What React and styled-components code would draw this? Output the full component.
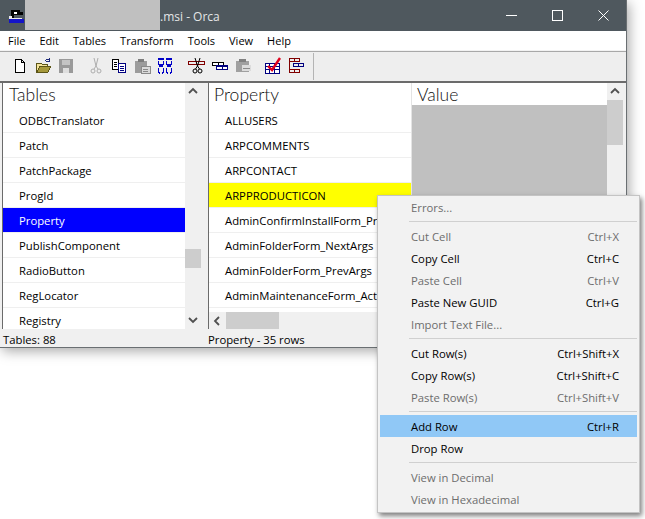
import React from "react";
import styled, { createGlobalStyle } from "styled-components";

const GlobalStyle = createGlobalStyle`
  html, body { margin: 0; padding: 0; background: #fff; }
  body { font-family: "Open Sans", "Noto Sans", "Liberation Sans", sans-serif; font-size: 11.3px; color: #000; }
`;

const Page = styled.div`
  position: relative;
  width: 645px;
  height: 519px;
  overflow: hidden;
`;

const Window = styled.div`
  width: 627px;
  height: 348px;
  display: flex;
  flex-direction: column;
  background: #f0f0f0;
  box-shadow: 2px 3px 12px rgba(0, 0, 0, 0.35);
  border-right: 1px solid #6a6f72;
  border-bottom: 1px solid #6a6f72;
  box-sizing: border-box;
`;

const TitleBar = styled.div`
  height: 31px;
  flex: none;
  display: flex;
  align-items: center;
  background: #4f585e;
  color: #e4e6e7;
  font-size: 12px;
  padding-left: 8px;
`;

const AppIcon = styled.svg`
  width: 17px;
  height: 17px;
  flex: none;
`;

const Redacted = styled.div`
  width: 135px;
  height: 30px;
  align-self: flex-start;
  background: #c0c0c0;
`;

const WindowTitle = styled.span`
  flex: 1;
  padding-top: 1px;
`;

const WinButton = styled.button`
  width: 46px;
  height: 30px;
  padding: 0;
  border: 0;
  background: none;
  display: flex;
  align-items: center;
  justify-content: center;
`;

const WinControls = styled.div`
  display: flex;
`;

const MenuBar = styled.div`
  height: 20px;
  flex: none;
  display: flex;
  align-items: center;
  background: #fff;
  padding-left: 8px;
  gap: 14px;
  font-size: 11px;
  border-bottom: 1px solid #f2f2f2;
  box-sizing: border-box;
`;

const Toolbar = styled.div`
  height: 30px;
  flex: none;
  display: flex;
  align-items: center;
  padding-left: 8px;
  padding-bottom: 1px;
  background: #eeeeee;
  border-top: 1px solid #a8a8a8;
  box-sizing: border-box;
`;

const ToolGroup = styled.div`
  display: flex;
  margin-right: ${(p) => p.$gap || 0}px;
`;

const ToolButton = styled.div`
  width: 23px;
  height: 23px;
  display: flex;
  align-items: center;
  justify-content: center;
`;

const ToolSep = styled.div`
  width: 1px;
  height: 27px;
  background: #b4b4b4;
`;

const Body = styled.div`
  height: 246px;
  flex: none;
  display: flex;
  background: #f0f0f0;
  border-top: 2px solid #6b6b6b;
  padding-left: 2px;
  padding-right: 3px;
`;

const Pane = styled.div`
  display: flex;
  flex: ${(p) => (p.$grow ? 1 : "none")};
  width: ${(p) => (p.$grow ? "auto" : "198px")};
  min-width: 0;
  border-left: 1px solid #6b6b6b;
  background: #fff;
  height: 246px;
  overflow: hidden;
`;

const Splitter = styled.div`
  width: 7px;
  flex: none;
  background: #f0f0f0;
`;

const List = styled.div`
  display: flex;
  flex-direction: column;
  flex: ${(p) => (p.$width ? "none" : 1)};
  width: ${(p) => (p.$width ? `${p.$width}px` : "auto")};
  min-width: 0;
  overflow: hidden;
`;

const HeaderCell = styled.div`
  height: ${(p) => p.$height || 25}px;
  flex: none;
  padding-left: ${(p) => p.$indent || 5}px;
  font-family: Lato, "Open Sans", sans-serif;
  font-size: 17.5px;
  font-weight: 300;
  line-height: 24px;
  color: #111;
`;

const Row = styled.div`
  height: 25px;
  flex: none;
  box-sizing: border-box;
  padding-left: 16px;
  line-height: 26px;
  white-space: nowrap;
  overflow: hidden;
  border-bottom: 1px solid #efefef;
  background: ${(p) => (p.$tone === "blue" ? "#0000ff" : p.$tone === "yellow" ? "#ffff00" : "#fff")};
  color: ${(p) => (p.$tone === "blue" ? "#fff" : "#000")};
`;

const ValueColumn = styled.div`
  width: 195px;
  flex: none;
  display: flex;
  flex-direction: column;
  border-left: 1px solid #e4e4e4;
`;

const ValueFill = styled.div`
  flex: 1;
  background: #c0c0c0;
`;

const VScroll = styled.div`
  width: 16px;
  flex: none;
  display: flex;
  flex-direction: column;
  background: #f0f0f0;
`;

const Arrow = styled.div`
  height: 17px;
  flex: none;
  display: flex;
  align-items: center;
  justify-content: center;
`;

const VTrack = styled.div`
  flex: 1;
  min-height: 0;
`;

const VThumb = styled.div`
  height: ${(p) => p.$size}px;
  margin-top: ${(p) => p.$offset}px;
  background: #cdcdcd;
`;

const RightMain = styled.div`
  flex: 1;
  min-width: 0;
  display: flex;
  flex-direction: column;
`;

const RightTop = styled.div`
  flex: 1;
  min-height: 0;
  display: flex;
`;

const HScroll = styled.div`
  height: 17px;
  margin-top: 3px;
  flex: none;
  display: flex;
  align-items: center;
  background: #f0f0f0;
`;

const HArrow = styled.div`
  width: 17px;
  flex: none;
  display: flex;
  justify-content: center;
`;

const HThumb = styled.div`
  width: 53px;
  height: 17px;
  background: #cdcdcd;
`;

const StatusBar = styled.div`
  flex: 1;
  display: flex;
  align-items: center;
  background: #f0f0f0;
  padding-left: 3px;
  padding-top: 3px;
`;

const StatusCell = styled.div`
  width: ${(p) => p.$width}px;
  flex: none;
`;

const ContextMenu = styled.div`
  position: absolute;
  left: 377px;
  top: 195px;
  width: 263px;
  height: 318px;
  box-sizing: border-box;
  padding: 0 2px 2px;
  background: #f2f2f2;
  border: 1px solid #c4c4c4;
  box-shadow: 2px 3px 5px rgba(0, 0, 0, 0.5);
  display: flex;
  flex-direction: column;
`;

const MenuItem = styled.div`
  height: 22px;
  flex: none;
  display: flex;
  align-items: center;
  justify-content: space-between;
  padding: 0 18px 0 31px;
  color: ${(p) => (p.$disabled ? "#6d6d6d" : "#000")};
  background: ${(p) => (p.$active ? "#90c8f6" : "transparent")};
`;

const MenuSep = styled.div`
  height: 1px;
  flex: none;
  margin: 3px 0 3px 29px;
  background: #d0d0d0;
`;

const menuBlocks = [
  [{ label: "Errors...", off: true }],
  [
    { label: "Cut Cell", key: "Ctrl+X", off: true },
    { label: "Copy Cell", key: "Ctrl+C" },
    { label: "Paste Cell", key: "Ctrl+V", off: true },
    { label: "Paste New GUID", key: "Ctrl+G" },
    { label: "Import Text File...", off: true },
  ],
  [
    { label: "Cut Row(s)", key: "Ctrl+Shift+X" },
    { label: "Copy Row(s)", key: "Ctrl+Shift+C" },
    { label: "Paste Row(s)", key: "Ctrl+Shift+V", off: true },
  ],
  [
    { label: "Add Row", key: "Ctrl+R", active: true },
    { label: "Drop Row" },
  ],
  [
    { label: "View in Decimal", off: true },
    { label: "View in Hexadecimal", off: true },
  ],
];

const tables = ["ODBCTranslator", "Patch", "PatchPackage", "ProgId", "Property", "PublishComponent", "RadioButton", "RegLocator", "Registry"];
const props = ["ALLUSERS", "ARPCOMMENTS", "ARPCONTACT", "ARPPRODUCTICON", "AdminConfirmInstallForm_Pr", "AdminFolderForm_NextArgs", "AdminFolderForm_PrevArgs", "AdminMaintenanceForm_Action"];
const menus = ["File", "Edit", "Tables", "Transform", "Tools", "View", "Help"];

const Icon = ({ children }) => (
  <svg width="18" height="18" viewBox="0 0 18 18" shapeRendering="crispEdges">{children}</svg>
);

const Grid = ({ x, y, c, w = 5 }) => (
  <g fill="none" stroke={c}>
    <rect x={x + 0.5} y={y + 0.5} width={w} height="3" />
    <rect x={x + w + 0.5} y={y + 0.5} width={w} height="3" />
  </g>
);

const NewIcon = () => (
  <Icon>
    <path d="M4.5 2.5h6l3 3v10h-9z M10.5 2.5v3h3" fill="#fff" stroke="#000" />
  </Icon>
);
const OpenIcon = () => (
  <Icon>
    <path d="M2 6h5l1 1h5v8H2z" fill="#f3e39a" stroke="#5c5518" />
    <path d="M3 15l3-6h11l-3 6z" fill="#a6993c" stroke="#5c5518" />
    <path d="M11 4c1-2 3-2 4-1M15 1v3h-3" fill="none" stroke="#1d2a78" />
  </Icon>
);
const SaveIcon = () => (
  <Icon>
    <path d="M2 2h14v14H2z" fill="#9a9a9a" />
    <path d="M5 3h8v5H5z" fill="#c4c4c4" />
    <path d="M6 11h6v5H6z" fill="#dedede" />
  </Icon>
);
const CutIcon = () => (
  <Icon>
    <path d="M7 1l2 8 2-8M9 9l-2 3M9 9l2 3" fill="none" stroke="#adadad" shapeRendering="auto" />
    <circle cx="6" cy="14" r="2" fill="none" stroke="#adadad" shapeRendering="auto" />
    <circle cx="12" cy="14" r="2" fill="none" stroke="#adadad" shapeRendering="auto" />
  </Icon>
);
const CopyIcon = () => (
  <Icon>
    <path d="M2.5 2.5h6v10h-6z" fill="#fff" stroke="#000" />
    <path d="M4 5h3M4 7h3M4 9h3" stroke="#000" />
    <path d="M8.5 6.5h7v9h-7z" fill="#fff" stroke="#000080" />
    <path d="M10 9h4M10 11h4M10 13h4" stroke="#000080" />
  </Icon>
);
const PasteIcon = () => (
  <Icon>
    <path d="M2 4h12v12H2z" fill="#9c9c9c" />
    <path d="M5 2h6v3H5z" fill="#7d7d7d" />
    <path d="M8 9h9v7H8z" fill="#dadada" stroke="#8a8a8a" />
    <path d="M10 12h5M10 14h5" stroke="#8a8a8a" />
  </Icon>
);
const FindIcon = () => (
  <Icon>
    <path d="M2 1h6v2H2zM10 1h6v2h-6z" fill="#0000c8" />
    <path d="M2 4h1v4H2zM7 4h1v4H7zM10 4h1v4h-1zM15 4h1v4h-1z" fill="#0000c8" />
    <path d="M3 7h4v3H3zM11 7h4v3h-4z" fill="#0000c8" />
    <path d="M2 11h1v5H2zM7 11h1v5H7zM10 11h1v5h-1zM15 11h1v5h-1z" fill="#0000c8" />
    <path d="M3 15h1v2H3zM6 15h1v2H6zM11 15h1v2h-1zM14 15h1v2h-1z" fill="#0000c8" />
  </Icon>
);
const TableCutIcon = () => (
  <Icon>
    <Grid x={0} y={4} c="#800000" w={8} />
    <path d="M7 1l2.5 8 2.5-8M9.5 9l-2 3M9.5 9l2 3" fill="none" stroke="#000" shapeRendering="auto" />
    <circle cx="7" cy="14" r="2" fill="none" stroke="#000" shapeRendering="auto" />
    <circle cx="12" cy="14" r="2" fill="none" stroke="#000" shapeRendering="auto" />
  </Icon>
);
const TableCopyIcon = () => (
  <Icon>
    <path d="M1.5 5.5h11v3h-11zM7 5.5v3" fill="#fff" stroke="#000" />
    <path d="M5.5 8.5h11v4h-11zM11 8.5v4" fill="#fff" stroke="#000080" />
    <path d="M6 9h10v1H6z" fill="#000080" />
  </Icon>
);
const TablePasteIcon = () => (
  <Icon>
    <path d="M2 4h13v11H2z" fill="#a0a0a0" />
    <path d="M5 2h7v3H5z" fill="#808080" />
    <path d="M8 8h9v6H8z" fill="#dcdcdc" />
    <path d="M9 11h7" stroke="#8a8a8a" />
  </Icon>
);
const CheckTableIcon = () => (
  <Icon>
    <path d="M1 6h15v11H1z" fill="#fff" />
    <path d="M1 6.5h15M1 9.5h15M1 12.5h15M1 16.5h15M1.5 6v11M5.5 6v11M10.5 6v11M15.5 6v11" stroke="#000080" />
    <path d="M4 9l4 4 8-12" fill="none" stroke="#e0001c" strokeWidth="2.4" shapeRendering="auto" />
  </Icon>
);
const TreeTableIcon = () => (
  <Icon>
    <Grid x={2} y={1} c="#800000" />
    <Grid x={6} y={6} c="#000080" />
    <Grid x={2} y={12} c="#800000" />
    <path d="M2.5 4v9" stroke="#800000" />
  </Icon>
);

const Chevron = ({ dir }) => {
  const d = { up: "M1 6l4-4 4 4", down: "M1 2l4 4 4-4", left: "M6 1L2 5l4 4" }[dir];
  return (
    <svg width="10" height="10" viewBox="0 0 10 10">
      <path d={d} fill="none" stroke="#505050" strokeWidth="1.8" />
    </svg>
  );
};

const App = () => {
  return (
    <Page>
      <GlobalStyle />
      <Window>
        <TitleBar>
          <AppIcon viewBox="0 0 17 17" shapeRendering="crispEdges">
            <path d="M3 3h9v2h3v3H6v3H3z" fill="#000" />
            <path d="M6 5h3v2H6z" fill="#fff" />
            <path d="M1 9h3v2h10v1H1z" fill="#e8e8e8" />
            <path d="M1 12h15v4H1z" fill="#1414c8" />
          </AppIcon>
          <Redacted />
          <WindowTitle>.msi - Orca</WindowTitle>
          <WinControls>
            <WinButton>
              <svg width="11" height="11" viewBox="0 0 11 11"><path d="M0 5.5h11" stroke="#fff" /></svg>
            </WinButton>
            <WinButton>
              <svg width="11" height="11" viewBox="0 0 11 11"><rect x="0.5" y="0.5" width="10" height="10" fill="none" stroke="#fff" /></svg>
            </WinButton>
            <WinButton>
              <svg width="11" height="11" viewBox="0 0 11 11"><path d="M0.5 0.5l10 10M10.5 0.5l-10 10" stroke="#fff" /></svg>
            </WinButton>
          </WinControls>
        </TitleBar>
        <MenuBar>
          {menus.map((m) => <span key={m}>{m}</span>)}
        </MenuBar>
        <Toolbar>
          <ToolGroup $gap={7}>
            <ToolButton><NewIcon /></ToolButton>
            <ToolButton><OpenIcon /></ToolButton>
            <ToolButton><SaveIcon /></ToolButton>
          </ToolGroup>
          <ToolGroup $gap={9}>
            <ToolButton><CutIcon /></ToolButton>
            <ToolButton><CopyIcon /></ToolButton>
            <ToolButton><PasteIcon /></ToolButton>
            <ToolButton><FindIcon /></ToolButton>
          </ToolGroup>
          <ToolGroup $gap={7}>
            <ToolButton><TableCutIcon /></ToolButton>
            <ToolButton><TableCopyIcon /></ToolButton>
            <ToolButton><TablePasteIcon /></ToolButton>
          </ToolGroup>
          <ToolGroup $gap={6}>
            <ToolButton><CheckTableIcon /></ToolButton>
            <ToolButton><TreeTableIcon /></ToolButton>
          </ToolGroup>
          <ToolSep />
        </Toolbar>
        <Body>
          <Pane>
            <List>
              <HeaderCell $indent={6}>Tables</HeaderCell>
              {tables.map((t) => (
                <Row key={t} $tone={t === "Property" ? "blue" : undefined}>{t}</Row>
              ))}
            </List>
            <VScroll>
              <Arrow><Chevron dir="up" /></Arrow>
              <VTrack><VThumb $offset={149} $size={19} /></VTrack>
              <Arrow><Chevron dir="down" /></Arrow>
            </VScroll>
          </Pane>
          <Splitter />
          <Pane $grow>
            <RightMain>
              <RightTop>
                <List $width={202}>
                  <HeaderCell>Property</HeaderCell>
                  {props.map((p) => (
                    <Row key={p} $tone={p === "ARPPRODUCTICON" ? "yellow" : undefined}>{p}</Row>
                  ))}
                </List>
                <ValueColumn>
                  <HeaderCell $height={22}>Value</HeaderCell>
                  <ValueFill />
                </ValueColumn>
              </RightTop>
              <HScroll>
                <HArrow><Chevron dir="left" /></HArrow>
                <HThumb />
              </HScroll>
            </RightMain>
            <VScroll>
              <Arrow><Chevron dir="up" /></Arrow>
              <VTrack><VThumb $offset={0} $size={45} /></VTrack>
            </VScroll>
          </Pane>
        </Body>
        <StatusBar>
          <StatusCell $width={205}>Tables: 88</StatusCell>
          <StatusCell $width={200}>Property - 35 rows</StatusCell>
        </StatusBar>
      </Window>
      <ContextMenu>
        {menuBlocks.map((block, i) => (
          <React.Fragment key={i}>
            {i > 0 && <MenuSep />}
            {block.map((item) => (
              <MenuItem key={item.label} $disabled={item.off} $active={item.active}>
                <span>{item.label}</span>
                {item.key && <span>{item.key}</span>}
              </MenuItem>
            ))}
          </React.Fragment>
        ))}
      </ContextMenu>
    </Page>
  );
};

export default App;
